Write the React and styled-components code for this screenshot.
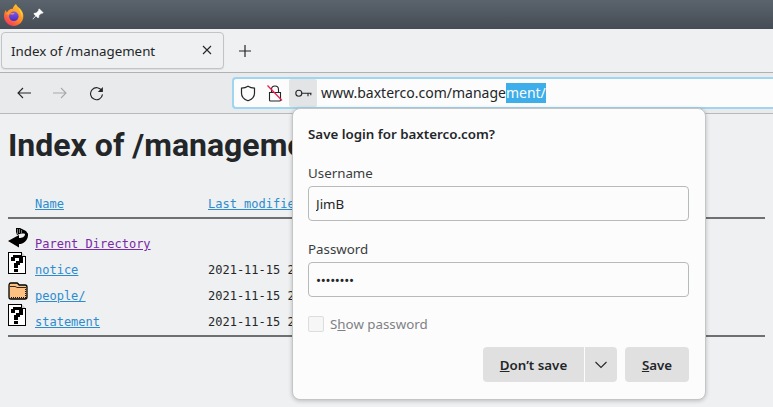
import React from "react";
import styled, { createGlobalStyle } from "styled-components";

const Global = createGlobalStyle`
  html, body { margin: 0; padding: 0; background: #eff0f1; }
  body { width: 773px; height: 407px; overflow: hidden; font-family: "Noto Sans", sans-serif; color: #232629; }
  * { box-sizing: border-box; }
`;

const rows = [
  { name: "notice", date: "2021-11-15 20:14", icon: "unknown" },
  { name: "people/", date: "2021-11-15 20:14", icon: "folder" },
  { name: "statement", date: "2021-11-15 20:14", icon: "unknown" },
];

function FirefoxLogo() {
  return (
    <svg width="22" height="24" viewBox="0 0 22 24">
      <defs>
        <linearGradient id="ffBody" x1="0.8" y1="0.1" x2="0.2" y2="1">
          <stop offset="0" stopColor="#ffc02e" />
          <stop offset="0.5" stopColor="#ff8a26" />
          <stop offset="1" stopColor="#f5305f" />
        </linearGradient>
        <linearGradient id="ffCore" x1="0.5" y1="0" x2="0.5" y2="1">
          <stop offset="0" stopColor="#7a5cf0" />
          <stop offset="1" stopColor="#4c2ac0" />
        </linearGradient>
      </defs>
      <path d="M13 1c.6 2 2.400 3 4 4.600 2.800 2.800 3.800 6 3.200 9.200C19.400 19.600 15.400 23 11 23 5.400 23 1 18.600 1 13c0-2.400.8-4.600 2-6.200 0 1.200.4 2 1 2.600C5 7 7.600 5.600 9.800 5.800 10 4 11.400 2.200 13 1z" fill="url(#ffBody)" />
      <path d="M3 11c2-3 5-4 7-3.600l-1 2 3.500.6c-.2 1-1.500 1.400-3 1.400-1.500 2-3 1-6.500-.4z" fill="#ff9a2e" />
      <circle cx="10.800" cy="13.300" r="4.800" fill="url(#ffCore)" />
      <path d="M6 11c1.600-1.200 3.600-1.400 5.600-.6-.6.800-2 1.200-3 1.200L6 11z" fill="#ff8a24" />
      <path d="M15 5c2.600 1.600 4.400 4.400 4.400 7.400 0 .8-.2 1.600-.4 2.200-.2-3.400-1.800-6.600-4-9.600z" fill="#ffd84a" />
    </svg>
  );
}

function PinIcon() {
  return (
    <svg width="12" height="12" viewBox="0 0 12 12">
      <path d="M7.300.8l3.900 3.900-1.300.9-.7-.3-2.300 2.300-.1 1.700-.8.700L3.800 7.800.9 11.100.8 11l3.100-3L1.800 5.900l.7-.8 1.700-.1 2.300-2.300-.2-.6z" fill="#fcfcfc" stroke="#fcfcfc" strokeWidth="0.5" />
    </svg>
  );
}

const stroke = { fill: "none", stroke: "#232629", strokeWidth: 1.1 };

function BackIcon({ flip, dim }) {
  return (
    <svg width="14" height="12" viewBox="0 0 14 12" style={{ transform: flip ? "scaleX(-1)" : "none" }}>
      <path d="M14 6H1M6 1L1 6l5 5" {...stroke} stroke={dim ? "#a6a8aa" : "#232629"} />
    </svg>
  );
}

function ReloadIcon() {
  return (
    <svg width="15" height="15" viewBox="0 0 16 16">
      <path d="M13.700 5.200A6.400 6.400 0 1 0 14.400 9" {...stroke} strokeWidth="1.200" />
      <path d="M14.800 1v5.400H9.400z" fill="#232629" />
    </svg>
  );
}

function ShieldIcon() {
  return (
    <svg width="16" height="17" viewBox="0 0 16 17">
      <path d="M8 1.200c2 1.200 4.200 1.800 6.500 2v5c0 3.500-3 6.300-6.500 7.600-3.500-1.300-6.500-4.100-6.500-7.600v-5c2.300-.2 4.500-.8 6.500-2z" {...stroke} strokeWidth="1.200" />
    </svg>
  );
}

function LockIcon() {
  return (
    <svg width="16" height="18" viewBox="0 0 16 18">
      <path d="M4.500 8V5.500a3.500 3.500 0 0 1 7 0V8M2.500 8.500h11v7.500a1 1 0 0 1-1 1h-9a1 1 0 0 1-1-1z" {...stroke} />
      <path d="M.5 1.500L15 16.500" stroke="#ed1f52" strokeWidth="1.300" />
    </svg>
  );
}

function KeyIcon() {
  return (
    <svg width="17" height="9" viewBox="0 0 17 9">
      <circle cx="3.800" cy="4.200" r="3" {...stroke} />
      <path d="M6.800 4.200h9.700M13 4.200v3M15.800 4.200v2" {...stroke} />
    </svg>
  );
}

function ParentIcon() {
  return (
    <svg width="20" height="20" viewBox="0 0 20 20">
      <path d="M0 13l11-6v3c3 0 6-1 6-4l3-.5c.5 6.500-4 10.500-9 10.500v3.500z" fill="#000" />
      <path d="M8 0h4l6 3 2 3h-3C15 5 11 6 9 7L8 4z" fill="#000" />
      <path d="M9 1h1v5H9zM11 1h1v4h-1zM13 2h1v3h-1z" fill="#777" />
    </svg>
  );
}

function UnknownIcon() {
  return (
    <svg width="20" height="22" viewBox="0 0 20 22" shapeRendering="crispEdges">
      <path d="M.5.500h13l4 4v17H.5z" fill="#fff" stroke="#000" />
      <path d="M13.500.500v4h4" fill="#ccc" stroke="#000" />
      <path d="M5 3h8v1h2v7h-3v2H10v3H6v-5h2V9h3V6H7v3H3V5h2zM6 17h4v3H6z" fill="#000" />
    </svg>
  );
}

function FolderIcon() {
  return (
    <svg width="20" height="18" viewBox="0 0 20 18">
      <path d="M1 4c0-2 .5-3 2-3h6c1 0 1.500 2 2.500 2H17c1.500 0 2 1 2 2v10c0 1.500-.5 2-2 2H3c-1.500 0-2-.5-2-2z" fill="#fdc182" stroke="#000" strokeWidth="1.300" />
      <path d="M2 4.500h5c1 0 1.500 1 2 1h9" fill="none" stroke="#000" strokeWidth="0.800" />
      <path d="M3 15.600h15M17.600 7v8" fill="none" stroke="#000" strokeWidth="1" strokeDasharray="1 1" />
    </svg>
  );
}

function Chevron() {
  return (
    <svg width="14" height="8" viewBox="0 0 14 8">
      <path d="M1.500 1L7 6.500 12.500 1" {...stroke} />
    </svg>
  );
}

export default function App() {
  return (
    <>
      <Global />
      <Window>
        <TitleBar>
          <FirefoxLogo />
          <PinSlot>
            <PinIcon />
          </PinSlot>
        </TitleBar>
        <TabStrip>
          <Tab>
            <span>Index of /management</span>
            <TabClose>
              <svg width="10" height="10" viewBox="0 0 10 10">
                <path d="M1 1l8 8M9 1L1 9" {...stroke} />
              </svg>
            </TabClose>
          </Tab>
          <NewTab>
            <svg width="12" height="12" viewBox="0 0 12 12">
              <path d="M6 0v12M0 6h12" {...stroke} strokeWidth="1.200" />
            </svg>
          </NewTab>
        </TabStrip>
        <NavBar>
          <NavButtons>
            <BackIcon />
            <BackIcon flip dim />
            <ReloadIcon />
          </NavButtons>
          <UrlBar>
            <UrlIcon>
              <ShieldIcon />
            </UrlIcon>
            <UrlIcon>
              <LockIcon />
            </UrlIcon>
            <KeyButton>
              <KeyIcon />
            </KeyButton>
            <UrlText>
              www.baxterco.com/manage<Selected>ment/</Selected>
            </UrlText>
          </UrlBar>
        </NavBar>
        <Page>
          <Heading>Index of /management</Heading>
          <Listing>
            <HeadRow>
              <span />
              <FileLink href="#name">Name</FileLink>
              <FileLink href="#modified">Last modified</FileLink>
            </HeadRow>
            <Rule />
            <Row>
              <ParentIcon />
              <FileLink href="#parent" $visited>
                Parent Directory
              </FileLink>
              <span />
            </Row>
            {rows.map((row) => (
              <Row key={row.name}>
                {row.icon === "folder" ? <FolderIcon /> : <UnknownIcon />}
                <FileLink href={"#" + row.name}>{row.name}</FileLink>
                <span>{row.date}</span>
              </Row>
            ))}
            <Rule $end />
          </Listing>
        </Page>
        <Popup>
          <PopupTitle>Save login for baxterco.com?</PopupTitle>
          <Field>
            <FieldLabel>Username</FieldLabel>
            <TextBox type="text" value="JimB" readOnly />
          </Field>
          <Field>
            <FieldLabel>Password</FieldLabel>
            <TextBox type="text" value="••••••••" readOnly $dots />
          </Field>
          <ShowPassword>
            <CheckBox />
            <span>
              S<u>h</u>ow password
            </span>
          </ShowPassword>
          <Actions>
            <SplitButton>
              <GreyButton $wide>
                <u>D</u>on’t save
              </GreyButton>
              <GreyButton $menu>
                <Chevron />
              </GreyButton>
            </SplitButton>
            <GreyButton>
              <u>S</u>ave
            </GreyButton>
          </Actions>
        </Popup>
      </Window>
    </>
  );
}

const Window = styled.div`
  position: relative;
  width: 773px;
  height: 407px;
  overflow: hidden;
  background: #eff0f1;
`;

const TitleBar = styled.div`
  height: 29px;
  display: flex;
  align-items: center;
  padding: 0 0 0 3px;
  background: linear-gradient(#5b636c, #454c55);
`;

const PinSlot = styled.div`
  display: flex;
  margin-left: 7px;
  margin-bottom: 1px;
`;

const TabStrip = styled.div`
  height: 44px;
  display: flex;
  align-items: flex-start;
  padding: 3px 0 0 1px;
  border-bottom: 1px solid #b0b1b3;
`;

const Tab = styled.div`
  width: 223px;
  height: 37px;
  display: flex;
  align-items: center;
  justify-content: space-between;
  padding: 0 11px 0 9px;
  font-size: 13.33px;
  background: #eff0f1;
  border: 1px solid #c2c3c5;
  border-radius: 4px;
  box-shadow: 0 1px 1px rgba(0, 0, 0, 0.08);
`;

const TabClose = styled.span`
  display: flex;
  margin-bottom: 2px;
`;

const NewTab = styled.div`
  display: flex;
  margin: 13px 0 0 15px;
`;

const NavBar = styled.div`
  height: 41px;
  display: flex;
  align-items: flex-start;
  padding-top: 4px;
  background: #e9eaeb;
  border-bottom: 1px solid #b8b9ba;
`;

const NavButtons = styled.div`
  width: 232px;
  height: 32px;
  display: flex;
  align-items: center;
  gap: 22px;
  padding-left: 17px;
`;

const UrlBar = styled.div`
  flex: 1;
  height: 32px;
  display: flex;
  align-items: center;
  background: #fcfcfc;
  border: 2px solid #9fd5f1;
  border-right: none;
  border-radius: 4px 0 0 4px;
`;

const UrlIcon = styled.div`
  width: 27px;
  display: flex;
  justify-content: center;
`;

const KeyButton = styled.div`
  width: 28px;
  height: 28px;
  margin-left: 1px;
  display: flex;
  align-items: center;
  justify-content: center;
  background: #e3e4e5;
  border-radius: 2px;
`;

const UrlText = styled.div`
  margin-left: 4px;
  font-size: 14px;
  line-height: 20px;
  white-space: nowrap;
`;

const Selected = styled.span`
  display: inline-block;
  background: #3daee9;
  color: #fcfcfc;
`;

const Page = styled.div`
  padding: 0 8px;
`;

const Heading = styled.h1`
  margin: 12px 0 0;
  font: 700 32px/38px Roboto, sans-serif;
  color: #232629;
  white-space: nowrap;
`;

const Listing = styled.div`
  margin-top: 33px;
  font: 12px/14px "DejaVu Sans Mono", monospace;
  color: #232629;
`;

const Row = styled.div`
  height: 26px;
  display: grid;
  grid-template-columns: 27px 173px 1fr;
  align-items: end;
  padding-bottom: 1px;
  white-space: pre;

  svg {
    margin-bottom: 3px;
  }
`;

const HeadRow = styled(Row)`
  height: 14px;
  padding-bottom: 0;
`;

const FileLink = styled.a`
  justify-self: start;
  color: ${(p) => (p.$visited ? "#7a2aa8" : "#2b8ccf")};
  text-decoration: underline;
`;

const Rule = styled.div`
  height: 2px;
  margin: ${(p) => (p.$end ? "5px 0 0" : "6px 0 7px")};
  background: #6e7072;
`;

const Popup = styled.div`
  position: absolute;
  left: 292px;
  top: 108px;
  width: 414px;
  height: 292px;
  display: flex;
  flex-direction: column;
  padding: 17px 16px 0 15px;
  background: #fcfcfc;
  border: 1px solid #c4c5c6;
  border-radius: 8px;
  box-shadow: 0 1px 4px rgba(0, 0, 0, 0.22);
`;

const PopupTitle = styled.div`
  font-size: 13.33px;
  line-height: 17px;
  font-weight: 600;
  margin-bottom: 21px;
`;

const Field = styled.div`
  display: flex;
  flex-direction: column;
  gap: 4px;
  margin-bottom: 19px;
`;

const FieldLabel = styled.div`
  font-size: 13.33px;
  line-height: 18px;
  color: #3a3d40;
`;

const TextBox = styled.input`
  height: 35px;
  width: 381px;
  padding: 0 7px;
  font: 13.33px "Noto Sans", sans-serif;
  letter-spacing: ${(p) => (p.$dots ? "-0.3px" : "0")};
  color: #232629;
  background: #fcfcfc;
  border: 1px solid #b8b9ba;
  border-radius: 4px;
  outline: none;
`;

const ShowPassword = styled.div`
  display: flex;
  align-items: center;
  gap: 6px;
  margin-top: -1px;
  font-size: 13.33px;
  line-height: 18px;
  color: #7f8184;
`;

const CheckBox = styled.span`
  width: 16px;
  height: 16px;
  background: #f6f6f6;
  border: 1px solid #dcdddd;
  border-radius: 2px;
`;

const Actions = styled.div`
  display: flex;
  justify-content: flex-end;
  gap: 8px;
  margin-top: 14px;
`;

const SplitButton = styled.div`
  display: flex;
  gap: 1px;
`;

const GreyButton = styled.button`
  width: ${(p) => (p.$wide ? "101px" : p.$menu ? "32px" : "64px")};
  height: 35px;
  display: flex;
  align-items: center;
  justify-content: center;
  padding: 0;
  font: 600 13.33px "Noto Sans", sans-serif;
  color: #232629;
  background: #e0e0e1;
  border: none;
  border-radius: ${(p) => (p.$wide ? "4px 0 0 4px" : p.$menu ? "0 4px 4px 0" : "4px")};
`;
